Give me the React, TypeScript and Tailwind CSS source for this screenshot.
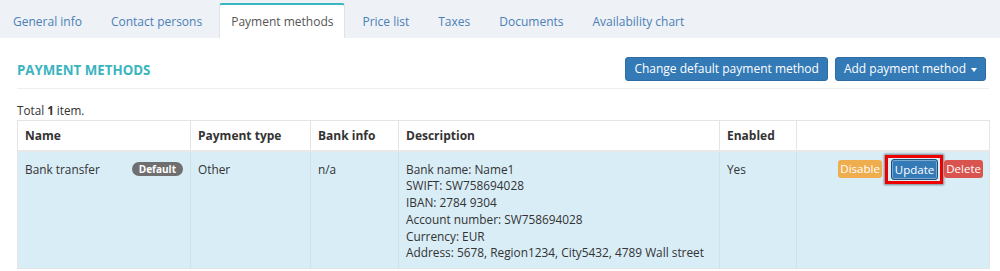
import React from "react";

const tabs = [
  "General info",
  "Contact persons",
  "Payment methods",
  "Price list",
  "Taxes",
  "Documents",
  "Availability chart",
];

const descLines = [
  "Bank name: Name1",
  "SWIFT: SW758694028",
  "IBAN: 2784 9304",
  "Account number: SW758694028",
  "Currency: EUR",
  "Address: 5678, Region1234, City5432, 4789 Wall street",
];

export default function App() {
  return (
    <div className="w-[1000px] h-[271px] overflow-hidden bg-white font-['Open_Sans',sans-serif] text-[#333]">
      {/* Tab bar */}
      <div className="h-[38px] bg-[#eef1f6] flex items-end pl-[1px] gap-[5px]">
        {tabs.map((t) =>
          t === "Payment methods" ? (
            <div
              key={t}
              className="h-[35px] px-[11px] flex items-center bg-white border-x border-[#dfe3e8] border-t-[2px] border-t-[#3ab6c1] rounded-t-[3px] text-[12px] text-[#555] pt-[1px]"
            >
              {t}
            </div>
          ) : (
            <div
              key={t}
              className="h-[35px] px-[12px] flex items-center text-[12px] text-[#4b80b7] pt-[3px]"
            >
              {t}
            </div>
          )
        )}
      </div>

      <div className="pl-[17px] pr-[11px]">
        {/* Heading row */}
        <div className="flex items-center justify-between pt-[19px] pb-[7px] border-b border-[#eee] pr-[3px]">
          <h2 className="text-[13.3px] font-bold text-[#3ab4bf] pt-[3px]">PAYMENT METHODS</h2>
          <div className="flex gap-[7px]">
            <button className="h-[24px] px-[8px] bg-[#337ab7] border border-[#2e6da4] rounded-[3px] text-white text-[12px] leading-none">
              Change default payment method
            </button>
            <button className="h-[24px] px-[8px] bg-[#337ab7] border border-[#2e6da4] rounded-[3px] text-white text-[12px] leading-none flex items-center gap-[5px]">
              Add payment method
              <span className="inline-block w-0 h-0 border-l-[3.5px] border-r-[3.5px] border-t-[4px] border-l-transparent border-r-transparent border-t-white mt-[1px]" />
            </button>
          </div>
        </div>

        <div className="text-[11.7px] pt-[13px] pb-[1px] leading-[17px]">
          Total <b>1</b> item.
        </div>

        <table className="w-[972px] border-collapse border border-[#e4e4e4] text-[11.85px] leading-[16.8px] table-fixed">
          <colgroup>
            <col className="w-[173px]" />
            <col className="w-[120px]" />
            <col className="w-[88px]" />
            <col className="w-[321px]" />
            <col className="w-[77px]" />
            <col className="w-[193px]" />
          </colgroup>
          <thead>
            <tr className="h-[30px] border-b-2 border-[#e8e8e8]">
              {["Name", "Payment type", "Bank info", "Description", "Enabled", ""].map((h, i) => (
                <th
                  key={i}
                  className="text-left font-bold text-[12px] px-[7px] pt-[2px] border-r border-[#e4e4e4]"
                >
                  {h}
                </th>
              ))}
            </tr>
          </thead>
          <tbody>
            <tr className="bg-[#d9edf7] align-top">
              <td className="px-[7px] pt-[9px] pb-[7px] border-r border-[#cfe2ec]">
                <div className="flex items-center justify-between">
                  <span>Bank transfer</span>
                  <span className="h-[14px] px-[7px] rounded-full bg-[#6f6f6f] text-white text-[10px] font-bold leading-[14px]">
                    Default
                  </span>
                </div>
              </td>
              <td className="px-[7px] pt-[9px] pb-[7px] border-r border-[#cfe2ec]">Other</td>
              <td className="px-[7px] pt-[9px] pb-[7px] border-r border-[#cfe2ec]">n/a</td>
              <td className="px-[7px] pt-[9px] pb-[7px] border-r border-[#cfe2ec]">
                {descLines.map((l) => (
                  <div key={l}>{l}</div>
                ))}
              </td>
              <td className="px-[7px] pt-[9px] pb-[7px] border-r border-[#cfe2ec]">Yes</td>
              <td className="pr-[6px] pt-[3px]">
                <div className="flex items-center justify-end">
                  <button className="h-[18px] px-[2px] bg-[#f0ad4e] rounded-[3px] text-white text-[11.5px] leading-none">
                    Disable
                  </button>
                  <span className="ml-[3px] pl-[3px] pr-[2px] py-[1px] border-[3px] border-[#ee0000] shadow-[0_0_2px_1px_rgba(0,0,0,0.45)]">
                    <span className="block h-[21px] px-[3px] bg-[#337ab7] border border-[#1f4f78] rounded-[3px] text-white text-[11.5px] leading-[19px] shadow-[inset_0_0_0_1px_rgba(255,255,255,0.35)]">
                      Update
                    </span>
                  </span>
                  <button className="ml-[1px] h-[18px] px-[2px] bg-[#d9534f] rounded-[3px] text-white text-[11.5px] leading-none">
                    Delete
                  </button>
                </div>
              </td>
            </tr>
          </tbody>
        </table>
      </div>
    </div>
  );
}
